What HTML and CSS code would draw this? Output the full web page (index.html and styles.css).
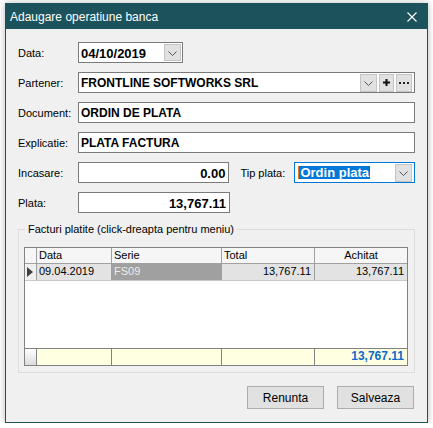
FILE: index.html
```html
<!DOCTYPE html>
<html>
<head>
    <title>Adaugare operatiune banca</title>
    <link rel="stylesheet" href="styles.css">
</head>
<body>
    <div class="window">
        <div class="titlebar">
            <span class="title">Adaugare operatiune banca</span>
            <svg class="close" width="10" height="10" viewBox="0 0 10 10">
                <path d="M0.5 0.5 L9.5 9.5 M9.5 0.5 L0.5 9.5" stroke="#fff" stroke-width="1.1" fill="none"/>
            </svg>
        </div>

        <div class="content">
            <!-- Data -->
            <div class="row">
                <label class="lbl">Data:</label>
                <div class="field field-date">
                    <span class="val">04/10/2019</span>
                    <span class="dd-btn"><svg width="9" height="5" viewBox="0 0 9 5"><polyline points="0.5,0.5 4.5,4.5 8.5,0.5" stroke="#555" fill="none"/></svg></span>
                </div>
            </div>

            <!-- Partener -->
            <div class="row">
                <label class="lbl">Partener:</label>
                <div class="field field-wide">
                    <span class="val">FRONTLINE SOFTWORKS SRL</span>
                    <span class="btns">
                        <span class="dd-btn tall"><svg width="9" height="5" viewBox="0 0 9 5"><polyline points="0.5,0.5 4.5,4.5 8.5,0.5" stroke="#555" fill="none"/></svg></span>
                        <span class="sm-btn plus"><svg width="7" height="7" viewBox="0 0 7 7"><path d="M3.5 0 V7 M0 3.5 H7" stroke="#111" stroke-width="2"/></svg></span>
                        <span class="sm-btn dots"><svg width="10" height="2" viewBox="0 0 10 2"><rect x="0" y="0" width="2" height="2" fill="#222"/><rect x="4" y="0" width="2" height="2" fill="#222"/><rect x="8" y="0" width="2" height="2" fill="#222"/></svg></span>
                    </span>
                </div>
            </div>

            <div class="row">
                <label class="lbl">Document:</label>
                <div class="field field-wide"><span class="val">ORDIN DE PLATA</span></div>
            </div>

            <div class="row">
                <label class="lbl">Explicatie:</label>
                <div class="field field-wide"><span class="val">PLATA FACTURA</span></div>
            </div>

            <div class="row">
                <label class="lbl">Incasare:</label>
                <div class="field field-num"><span class="val">0.00</span></div>
                <label class="lbl lbl-tip">Tip plata:</label>
                <div class="field field-select">
                    <span class="caret"></span><span class="sel-text">Ordin plata</span>
                    <span class="dd-btn tall"><svg width="9" height="5" viewBox="0 0 9 5"><polyline points="0.5,0.5 4.5,4.5 8.5,0.5" stroke="#555" fill="none"/></svg></span>
                </div>
            </div>

            <div class="row">
                <label class="lbl">Plata:</label>
                <div class="field field-num"><span class="val">13,767.11</span></div>
            </div>

            <!-- Facturi -->
            <fieldset class="group">
                <legend>Facturi platite (click-dreapta pentru meniu)</legend>
                <div class="grid">
                    <div class="grow head">
                        <div class="cell ind"></div>
                        <div class="cell">Data</div>
                        <div class="cell">Serie</div>
                        <div class="cell">Total</div>
                        <div class="cell center">Achitat</div>
                    </div>
                    <div class="grow data">
                        <div class="cell ind"><svg width="6" height="10" viewBox="0 0 6 10"><polygon points="0,0 6,5 0,10" fill="#404040"/></svg></div>
                        <div class="cell">09.04.2019</div>
                        <div class="cell picked">FS09</div>
                        <div class="cell right">13,767.11</div>
                        <div class="cell right">13,767.11</div>
                    </div>
                    <div class="grid-empty"></div>
                    <div class="grow foot">
                        <div class="cell ind"></div>
                        <div class="cell"></div>
                        <div class="cell"></div>
                        <div class="cell"></div>
                        <div class="cell right sum">13,767.11</div>
                    </div>
                </div>
            </fieldset>

            <div class="actions">
                <button>Renunta</button>
                <button>Salveaza</button>
            </div>
        </div>
    </div>
</body>
</html>
```

FILE: styles.css
```css
body {
    margin: 0;
    background: #ffffff;
    font-family: "Liberation Sans", Arial, sans-serif;
    color: #000;
}

.window {
    margin: 3px 0 0 5px;
    width: 423px;
    height: 420px;
    box-sizing: border-box;
    border: 1px solid #1c525b;
    background: #f0f0f0;
    box-shadow: 0 0 7px rgba(0, 0, 0, 0.28);
    display: flex;
    flex-direction: column;
}

.titlebar {
    height: 25px;
    background: #1c525b;
    color: #fff;
    display: flex;
    align-items: center;
    justify-content: space-between;
    padding: 0 10px 0 4px;
    font-size: 12px;
}

.title {
    padding-top: 1px;
}

.close {
    display: block;
    margin-top: 1px;
}

.content {
    padding: 13px 12px 0 12px;
}

.row {
    display: flex;
    align-items: center;
    height: 21px;
    margin-bottom: 9px;
}

.lbl {
    width: 60px;
    flex: none;
    font-size: 11px;
}

.lbl-tip {
    width: 54px;
    margin-left: 11px;
}

.field {
    height: 21px;
    box-sizing: border-box;
    border: 1px solid #7a7a7a;
    background: #fff;
    display: flex;
    align-items: center;
    padding-left: 2px;
    font-size: 12px;
    font-weight: bold;
}

.val {
    flex: 1;
    white-space: nowrap;
    padding-top: 1px;
}

.field-date {
    width: 105px;
    padding-right: 1px;
    font-size: 13px;
}

.field-wide {
    width: 337px;
    padding-right: 2px;
}

.field-num {
    width: 152px;
    padding-right: 3px;
    font-size: 13px;
}

.field-num .val {
    text-align: right;
}

.field-select {
    width: 121px;
    border-color: #0078d7;
    padding-right: 2px;
}

.caret {
    width: 1px;
    height: 13px;
    background: #e07a2a;
    margin-left: 1px;
}

.sel-text {
    background: #0078d7;
    color: #fff;
    font-size: 13px;
    line-height: 13px;
    padding: 0 1px;
    flex: none;
}

.field-select .dd-btn {
    margin-left: auto;
}

.dd-btn {
    width: 17px;
    height: 17px;
    box-sizing: border-box;
    background: #e1e1e1;
    border: 1px solid #c4c4c4;
    display: flex;
    align-items: center;
    justify-content: center;
    flex: none;
}

.dd-btn svg {
    margin-top: 1px;
}

.dd-btn.tall {
    height: 18px;
}

.btns {
    display: flex;
    gap: 2px;
}

.sm-btn {
    height: 18px;
    box-sizing: border-box;
    background: #e1e1e1;
    border: 1px solid #c4c4c4;
    display: flex;
    align-items: center;
    justify-content: center;
}

.plus {
    width: 15px;
}

.dots {
    width: 16px;
}

/* group box */
.group {
    margin: 0;
    padding: 0 6px 6px 5px;
    border: 1px solid #dcdcdc;
    min-width: 0;
}

.group legend {
    font-size: 11px;
    line-height: 14px;
    padding: 0 3px;
    margin-left: 1px;
}

.grid {
    margin-top: 11px;
    height: 119px;
    box-sizing: border-box;
    border: 1px solid #828282;
    background: #fff;
    display: flex;
    flex-direction: column;
    font-size: 11px;
}

.grow {
    display: grid;
    grid-template-columns: 12px 75px 110px 93px 92px;
    height: 15px;
}

.cell {
    box-sizing: border-box;
    border-right: 1px solid #a0a0a0;
    padding: 0 2px;
    line-height: 14px;
    white-space: nowrap;
    overflow: hidden;
}

.cell:last-child {
    border-right: none;
}

.center {
    text-align: center;
}

.right {
    text-align: right;
    padding-right: 3px;
}

.head {
    background: #f6f6f6;
    border-bottom: 1px solid #a0a0a0;
}

.data {
    height: 16px;
    background: #e3e3e3;
    border-bottom: 1px solid #c8c8c8;
}

.data .cell {
    line-height: 15px;
}

.data .ind {
    background: #f0f0f0;
    display: flex;
    align-items: center;
    padding: 0 0 0 2px;
}

.picked {
    background: #a0a0a0;
    color: #ececec;
}

.grid-empty {
    flex: 1;
}

.foot {
    height: 16px;
    background: #ffffe1;
    border-top: 1px solid #828282;
}

.foot .cell {
    border-right-color: #828282;
}

.foot .ind {
    background: linear-gradient(#ffffff, #dcdcdc);
}

.sum {
    color: #0a6bcc;
    font-weight: bold;
    font-size: 12px;
    line-height: 15px;
}

.actions {
    display: flex;
    justify-content: flex-end;
    gap: 13px;
    margin: 13px 1px 0 0;
}

button {
    width: 77px;
    height: 23px;
    background: #e1e1e1;
    border: 1px solid #adadad;
    font-family: "Liberation Sans", Arial, sans-serif;
    font-size: 12px;
    color: #000;
    padding: 0;
}
```
